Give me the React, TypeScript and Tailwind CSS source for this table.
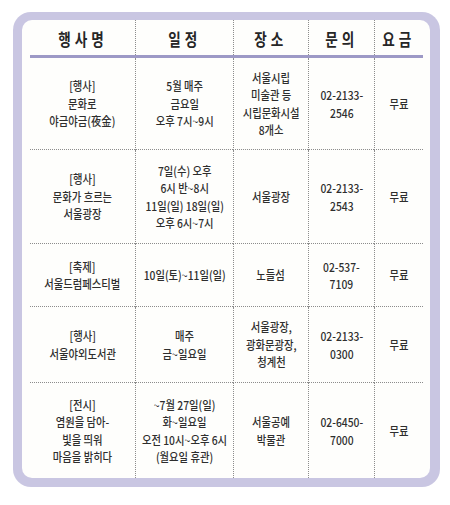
const headers = ['행사명', '일정', '장소', '문의', '요금']

const rows: { h: string; cells: string[][] }[] = [
  {
    h: 'h-[92px]',
    cells: [
      ['[행사]', '문화로', '야금야금(夜金)'],
      ['5월 매주', '금요일', '오후 7시~9시'],
      ['서울시립', '미술관 등', '시립문화시설', '8개소'],
      ['02-2133-', '2546'],
      ['무료'],
    ],
  },
  {
    h: 'h-[94px]',
    cells: [
      ['[행사]', '문화가 흐르는', '서울광장'],
      ['7일(수) 오후', '6시 반~8시', '11일(일) 18일(일)', '오후 6시~7시'],
      ['서울광장'],
      ['02-2133-', '2543'],
      ['무료'],
    ],
  },
  {
    h: 'h-[63px]',
    cells: [
      ['[축제]', '서울드럼페스티벌'],
      ['10일(토)~11일(일)'],
      ['노들섬'],
      ['02-537-', '7109'],
      ['무료'],
    ],
  },
  {
    h: 'h-[76px]',
    cells: [
      ['[행사]', '서울야외도서관'],
      ['매주', '금~일요일'],
      ['서울광장,', '광화문광장,', '청계천'],
      ['02-2133-', '0300'],
      ['무료'],
    ],
  },
  {
    h: 'h-[95px]',
    cells: [
      ['[전시]', '염원을 담아-', '빛을 띄워', '마음을 밝히다'],
      ['~7월 27일(일)', '화~일요일', '오전 10시~오후 6시', '(월요일 휴관)'],
      ['서울공예', '박물관'],
      ['02-6450-', '7000'],
      ['무료'],
    ],
  },
]

const colW = ['w-[105px]', 'w-[98px]', 'w-[75px]', 'w-[66px]', 'w-[49px]']

function Cell({ lines, col, last }: { lines: string[]; col: number; last: boolean }) {
  return (
    <div
      className={`${colW[col]} flex items-center justify-center text-center border-dotted border-[#8c8c8c] ${
        col > 0 ? 'border-l' : ''
      } ${last ? '' : 'border-b'}`}
    >
      <p className="scale-x-[0.86] whitespace-nowrap text-[12px] font-medium leading-[17.5px] text-[#2e2e2e]">
        {lines.map((l, i) => (
          <span key={i}>
            {i > 0 && <br />}
            {l}
          </span>
        ))}
      </p>
    </div>
  )
}

export default function App() {
  return (
    <div
      className="min-h-[505px] w-[450px] bg-white pl-[13px] pt-[12px]"
      style={{ fontFamily: '"Noto Sans CJK KR", "Noto Sans", sans-serif' }}
    >
      <div className="w-[427px] rounded-[18px] bg-[#c9c6e2] pb-[9px] pl-[9px] pr-[10px] pt-[8px]">
        <div className="flex h-[458px] flex-col rounded-[10px] bg-[#fefefc] pl-[8px] pr-[7px]">
          <div className="flex h-[38px] border-b-[3px] border-solid border-[#9d99c6]">
            {headers.map((t, i) => (
              <div
                key={t}
                className={`${colW[i]} flex items-center justify-center ${
                  i > 0 ? 'border-l border-dotted border-[#8c8c8c]' : ''
                }`}
              >
                <span className="scale-x-[0.8] whitespace-nowrap pt-[2px] text-[17px] font-bold tracking-[5px] text-[#262626]">
                  {t}
                </span>
              </div>
            ))}
          </div>
          {rows.map((r, ri) => (
            <div key={ri} className={`flex ${r.h}`}>
              {r.cells.map((c, ci) => (
                <Cell key={ci} lines={c} col={ci} last={ri === rows.length - 1} />
              ))}
            </div>
          ))}
        </div>
      </div>
    </div>
  )
}
